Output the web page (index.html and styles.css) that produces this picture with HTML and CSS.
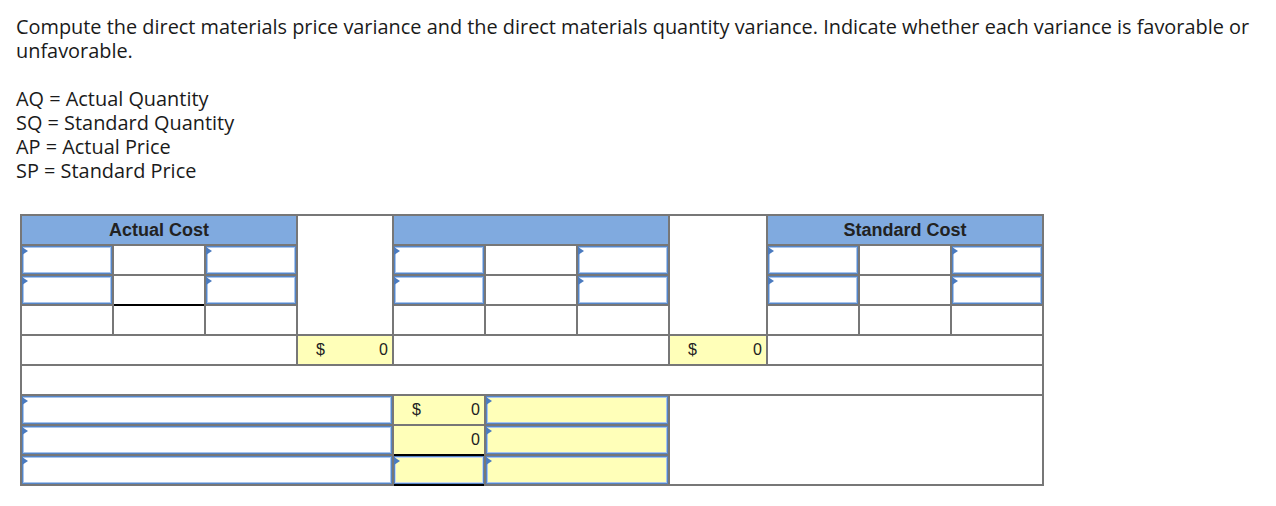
FILE: index.html
```html
<!DOCTYPE html>
<html lang="en">
<head>
<meta charset="utf-8">
<title>Direct materials variances</title>
<link rel="stylesheet" href="styles.css">
</head>
<body>
<div class="page">
  <p class="prompt">Compute the direct materials price variance and the direct materials quantity variance. Indicate whether each variance is favorable or unfavorable.</p>
  <div class="defs">
    <div>AQ = Actual Quantity</div>
    <div>SQ = Standard Quantity</div>
    <div>AP = Actual Price</div>
    <div>SP = Standard Price</div>
  </div>

  <div class="sheet">
    <!-- row 1 -->
    <div class="hdr span3">Actual Cost</div>
    <div class="cell rows4"></div>
    <div class="hdr span3"></div>
    <div class="cell rows4"></div>
    <div class="hdr span3">Standard Cost</div>
    <!-- row 2 -->
    <div class="in"></div><div class="cell"></div><div class="in"></div>
    <div class="in"></div><div class="cell"></div><div class="in"></div>
    <div class="in"></div><div class="cell"></div><div class="in"></div>
    <!-- row 3 -->
    <div class="in"></div><div class="cell underline"></div><div class="in"></div>
    <div class="in"></div><div class="cell"></div><div class="in"></div>
    <div class="in"></div><div class="cell"></div><div class="in"></div>
    <!-- row 4 -->
    <div class="cell"></div><div class="cell"></div><div class="cell"></div>
    <div class="cell"></div><div class="cell"></div><div class="cell"></div>
    <div class="cell"></div><div class="cell"></div><div class="cell"></div>
    <!-- row 5 -->
    <div class="cell span3"></div>
    <div class="money"><span class="cur">$</span><span class="val">0</span></div>
    <div class="cell span3"></div>
    <div class="money"><span class="cur">$</span><span class="val">0</span></div>
    <div class="cell span3"></div>
    <!-- row 6 -->
    <div class="cell span11"></div>
    <!-- row 7 -->
    <div class="in span4"></div>
    <div class="money"><span class="cur">$</span><span class="val">0</span></div>
    <div class="in yellow span2"></div>
    <div class="cell span4 rows3"></div>
    <!-- row 8 -->
    <div class="in span4"></div>
    <div class="money"><span class="cur"></span><span class="val">0</span></div>
    <div class="in yellow span2"></div>
    <!-- row 9 -->
    <div class="in span4"></div>
    <div class="in yellow total"></div>
    <div class="in yellow span2"></div>
  </div>
</div>
</body>
</html>
```
FILE: styles.css
```css
html, body {
  margin: 0;
  padding: 0;
  background: #ffffff;
}

.page {
  padding: 15px 0 0 16px;
  color: #1a1a1a;
  font-family: "Open Sans", "Lato", sans-serif;
  font-size: 19.9px;
  line-height: 24px;
}

.prompt {
  margin: 0 0 24px 0;
  padding-right: 4px;
}

.defs {
  margin: 0;
}

.sheet {
  display: grid;
  grid-template-columns: 90px 90px 90px 94px 90px 90px 90px 96px 90px 90px 90px;
  grid-auto-rows: 28px;
  gap: 2px;
  padding: 2px;
  background: #777777;
  width: max-content;
  margin: 31px 0 0 4px;
  font-family: "Liberation Sans", Arial, sans-serif;
  color: #222222;
  line-height: normal;
}

.cell {
  background: #ffffff;
}

.hdr {
  background: #80aadf;
  font-weight: bold;
  font-size: 18px;
  display: flex;
  align-items: center;
  justify-content: center;
}

.span2 { grid-column: span 2; }
.span3 { grid-column: span 3; }
.span4 { grid-column: span 4; }
.span11 { grid-column: span 11; }
.rows3 { grid-row: span 3; }
.rows4 { grid-row: span 4; }

.in {
  position: relative;
  background: #ffffff;
  border: 1px solid #5585c6;
  box-shadow: inset 0 0 0 1px #a9c5ec;
}

.in::before {
  content: "";
  position: absolute;
  left: -1px;
  top: 0;
  width: 0;
  height: 0;
  border-left: 6px solid #4b7bbf;
  border-top: 4px solid transparent;
  border-bottom: 4px solid transparent;
}

.in.yellow {
  background: #ffffb9;
}

.total {
  box-shadow: inset 0 0 0 1px #c9d8ee, 0 -2px 0 0 #000000, 0 2px 0 0 #000000;
}

.underline {
  box-shadow: 0 2px 0 0 #000000;
}

.money {
  background: #ffffb9;
  display: flex;
  align-items: center;
  justify-content: space-between;
  padding: 0 4px 0 18px;
  font-size: 16px;
}
```
